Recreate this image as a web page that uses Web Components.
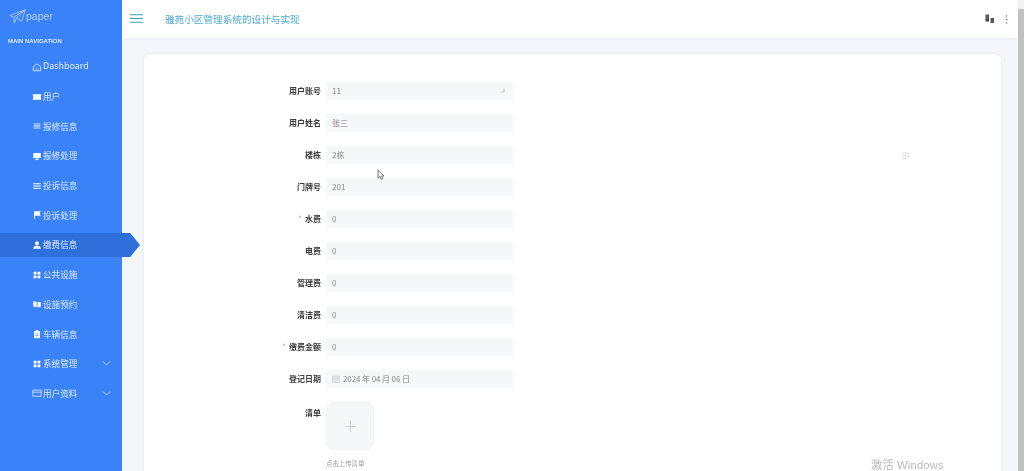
<!DOCTYPE html>
<html lang="zh"><head><meta charset="utf-8"><title>paper</title>
<style>html,body{margin:0;height:471px;overflow:hidden;background:#f3f6fa}body{font-family:"Liberation Sans","Noto Sans CJK SC",sans-serif}</style>
</head><body>
<app-shell>
  <side-bar slot="side">
    <nav-item icon="home" label="Dashboard" latin></nav-item>
    <nav-item icon="ticket" label="用户"></nav-item>
    <nav-item icon="list" label="报修信息"></nav-item>
    <nav-item icon="monitor" label="报修处理"></nav-item>
    <nav-item icon="lines" label="投诉信息"></nav-item>
    <nav-item icon="flag" label="投诉处理"></nav-item>
    <nav-item icon="user" label="缴费信息" active></nav-item>
    <nav-item icon="grid" label="公共设施"></nav-item>
    <nav-item icon="book" label="设施预约"></nav-item>
    <nav-item icon="clip" label="车辆信息"></nav-item>
    <nav-item icon="grid" label="系统管理" more></nav-item>
    <nav-item icon="cal" label="用户资料" more></nav-item>
  </side-bar>
  <top-bar slot="top"></top-bar>
  <form-card slot="main">
    <form-row label="用户账号" value="11" resize></form-row>
    <form-row label="用户姓名" value="张三"></form-row>
    <form-row label="楼栋" value="2栋"></form-row>
    <form-row label="门牌号" value="201"></form-row>
    <form-row label="水费" value="0" req></form-row>
    <form-row label="电费" value="0"></form-row>
    <form-row label="管理费" value="0"></form-row>
    <form-row label="清洁费" value="0"></form-row>
    <form-row label="缴费金额" value="0" req></form-row>
    <form-row label="登记日期" value="2024 年 04 月 06 日" date></form-row>
    <upload-row label="清单" hint="点击上传清单"></upload-row>
  </form-card>
</app-shell>
<script>
const ICONS={
home:'<path d="M1.500 6 6 2l4.500 4v4.500H1.500z" fill="none" stroke="currentColor" stroke-width=".9"/><path d="M4.500 8.500h3" stroke="currentColor" stroke-width=".7"/>',
ticket:'<path d="M1 2.800h10v2.200a1 1 0 0 0 0 2v2.200H1V7a1 1 0 0 0 0-2z" fill="currentColor"/>',
list:'<path d="M2 3.500h8M2 5.200h8M2 6.900h8M2 8.600h8" stroke="currentColor" stroke-width=".8"/>',
monitor:'<path d="M1.500 2.500h9v6h-9z" fill="currentColor"/><path d="M4 10.300h4M6 8.500v1.800" stroke="currentColor"/>',
lines:'<path d="M1.500 3.300h9M1.500 6h9M1.500 8.700h9" stroke="currentColor" stroke-width="1.200"/>',
flag:'<path d="M2.500 1.500h8l-1.500 2.700 1.500 2.700H3.500v4h-1z" fill="currentColor"/>',
user:'<circle cx="6" cy="3.800" r="2.300" fill="currentColor"/><path d="M1.500 10.500c0-3 2-4 4.500-4s4.500 1 4.500 4z" fill="currentColor"/>',
grid:'<path d="M2 2.200h3.400v3.200H2zM6.600 2.200H10v3.200H6.600zM2 6.600h3.400v3.200H2zM6.600 6.600H10v3.200H6.600z" fill="currentColor"/>',
book:'<path d="M1.500 2.500 5.500 3.500v6.500l-4-1zM6.500 3.500h4v6.500h-4z" fill="currentColor"/>',
clip:'<path d="M2.500 2.500h7v8.500h-7z" fill="currentColor"/><path d="M4.500 1.500h3v2h-3z" fill="currentColor"/><path d="M4 6h4M4 8h4" stroke="#3b82f6" stroke-width=".8"/>',
cal:'<path d="M1 2.500h10v7.500H1zM1 5h10" fill="none" stroke="currentColor" stroke-width=".8"/>'
};
function def(name,css,render){customElements.define(name,class extends HTMLElement{connectedCallback(){if(this.shadowRoot)return;this.attachShadow({mode:'open'}).innerHTML='<style>'+css+'</style>'+render(this)}})}

def('app-shell',`:host{display:grid;grid-template-columns:122px 1fr 6px;grid-template-rows:38px 1fr;width:1024px;height:471px;overflow:hidden;position:relative;filter:blur(.4px)}
::slotted([slot=side]){grid-row:1/3}
.bar{grid-column:3;grid-row:1/3;background:#f1f1f1;display:flex;flex-direction:column;padding-top:9px;box-sizing:border-box}
.bar i{display:block;flex:1;background:#c1c1c1}
.scroll{overflow:hidden;min-width:0}
.wm{position:absolute;left:871px;top:458px;font:11.200px/14px "Liberation Sans","Noto Sans CJK SC",sans-serif;color:#b8b8b8;letter-spacing:.2px}
.cur{position:absolute;left:377px;top:169px}
.dot{position:absolute;left:902px;top:152px}`,
()=>`<slot name="side"></slot><slot name="top"></slot><div class="scroll"><slot name="main"></slot></div><div class="bar"><i></i></div>
<svg class="dot" width="7" height="7" viewBox="0 0 7 7"><circle cx="3.500" cy="3.500" r="3" fill="none" stroke="#cfcfcf" stroke-width=".8"/><circle cx="3.500" cy="3.500" r="1" fill="#cfcfcf"/></svg>
<svg class="cur" width="9" height="12" viewBox="0 0 9 12"><path d="M1 .8v8.400l2-1.700 1.300 3 1.500-.7-1.300-2.800H7z" fill="#fff" stroke="#555" stroke-width=".8"/></svg>
<div class="wm">激活 Windows</div>`);

def('side-bar',`:host{display:block;background:#3a82f7;height:471px;color:#fff;box-sizing:border-box;position:relative;z-index:1}
.logo{display:flex;align-items:center;height:32px;padding-left:9px;color:#b4d0fa;font:300 10.500px "Liberation Sans",sans-serif}
.cap{font:700 6px/8px "Liberation Sans",sans-serif;color:#dbe8fd;padding-left:8px;height:20px;padding-top:5px;box-sizing:border-box}`,
()=>`<div class="logo"><svg width="17" height="15" viewBox="0 0 17 15"><path d="M.7 6.500 16.300.8 12.500 12.300 7.500 9 5.300 14 4.800 8.200zM4.800 8.200 16.300.8 7.500 9" fill="none" stroke="currentColor" stroke-width=".8" stroke-linejoin="round"/></svg><span>paper</span></div>
<div class="cap">MAIN NAVIGATION</div><div><slot></slot></div>`);

def('nav-item',`:host{display:flex;align-items:center;height:29.700px;padding-left:32px;box-sizing:border-box;position:relative;color:#dce9fe;font:8.600px/12px "Noto Sans CJK SC",sans-serif}
:host([latin]){font:9px/12px "Noto Sans CJK SC",sans-serif;color:#e6f0fe}
.bg{position:absolute;left:0;top:2.600px;height:24.500px;width:140px;background:#2f6fdc;clip-path:polygon(0 0,130px 0,100% 50%,130px 100%,0 100%)}
svg.i{width:10px;height:10px;margin-right:1px;flex:none;position:relative;color:#fff}
span{position:relative;top:-.5px}
.ch{position:absolute;left:102px;top:11px;width:9px;height:7px}`,
h=>`${h.hasAttribute('active')?'<div class="bg"></div>':''}<svg class="i" viewBox="0 0 12 12">${ICONS[h.getAttribute('icon')]}</svg><span>${h.getAttribute('label')}</span>${h.hasAttribute('more')?'<svg class="ch" viewBox="0 0 9 7"><path d="M1 1.500 4.500 5 8 1.500" fill="none" stroke="#c4dafb" stroke-width=".9"/></svg>':''}`);

def('top-bar',`:host{display:flex;align-items:center;background:#fff;height:38px;padding-left:8px;padding-right:10px;box-sizing:border-box;box-shadow:0 1px 3px rgba(0,0,0,.03);position:relative}
.t{margin-left:22px;font:9.640px/14px "Noto Sans CJK SC",sans-serif;color:#4ba9d8;flex:1;margin-top:-1px}
.b{display:block;width:13px;height:9px;margin-top:-2px}
.r{display:flex;align-items:center;gap:10px}`,
()=>`<svg class="b" viewBox="0 0 13 9"><path d="M0 .7h13M0 4.500h13M0 8.300h13" stroke="#3a9ec9" stroke-width="1.100"/></svg><div class="t">雅苑小区管理系统的设计与实现</div>
<div class="r"><svg width="10" height="10" viewBox="0 0 10 10"><path d="M.5.500h3.500v7H.5z" fill="#444"/><path d="M5.500 4h3.500v5H5.500z" fill="#555"/><path d="M1 2h2.500M1 4h2.500" stroke="#bbb" stroke-width=".5"/></svg><svg width="3" height="9" viewBox="0 0 3 9"><circle cx="1.500" cy="1" r=".8" fill="#777"/><circle cx="1.500" cy="4.500" r=".8" fill="#777"/><circle cx="1.500" cy="8" r=".8" fill="#777"/></svg></div>`);

def('form-card',`:host{display:block;margin:16px 17px 0 22px;background:#fff;border-radius:6px;padding:28px 0 0 0;height:440px;box-sizing:border-box;box-shadow:0 0 3px rgba(180,190,205,.25)}`,
()=>`<slot></slot>`);

def('form-row',`:host{display:flex;height:18px;margin-bottom:14px;font:8px/18px "Noto Sans CJK SC",sans-serif}
.l{width:182px;text-align:right;color:#3c3c3c;font-weight:700;flex:none;padding-right:5px;box-sizing:border-box}
.l b{color:#e58a8a;font-weight:400;margin-right:3px}
.f{width:187px;height:18px;background:#f5f7f8;border-radius:2px;color:#888;padding-left:6px;box-sizing:border-box;position:relative;display:flex;align-items:center;gap:3px}
.f svg.rz{position:absolute;right:8px;top:6px}
.d{letter-spacing:-.1px}`,
h=>`<div class="l">${h.hasAttribute('req')?'<b>*</b>':''}${h.getAttribute('label')}</div><div class="f">${h.hasAttribute('date')?'<svg width="8" height="8" viewBox="0 0 8 8"><path d="M.5 1h7v6.500h-7zM.5 3h7" fill="#e4e7ea" stroke="#c8cccf" stroke-width=".6"/></svg>':''}<span class="${h.hasAttribute('date')?'d':''}">${h.getAttribute('value')}</span>${h.hasAttribute('resize')?'<svg class="rz" width="5" height="5" viewBox="0 0 5 5"><path d="M4 .5V4H.8" fill="none" stroke="#b5b5b5" stroke-width=".7"/></svg>':''}</div>`);

def('upload-row',`:host{display:block;font:8px/18px "Noto Sans CJK SC",sans-serif}
.top{display:flex}
.l{width:182px;text-align:right;color:#3c3c3c;font-weight:700;padding-right:5px;box-sizing:border-box;flex:none;line-height:21px}
.u{width:48px;height:48px;background:#f5f7f8;border-radius:8px;border:1px solid #f0f2f3;box-sizing:border-box;display:flex;align-items:center;justify-content:center}
.h{margin:7px 0 0 182px;color:#999;font-size:6.400px;line-height:14px}`,
h=>`<div class="top"><div class="l">${h.getAttribute('label')}</div><div class="u"><svg width="11" height="11" viewBox="0 0 11 11"><path d="M5.500 0v11M0 5.500h11" stroke="#bcc2c8" stroke-width=".8"/></svg></div></div><div class="h">${h.getAttribute('hint')}</div>`);
</script>
</body></html>
